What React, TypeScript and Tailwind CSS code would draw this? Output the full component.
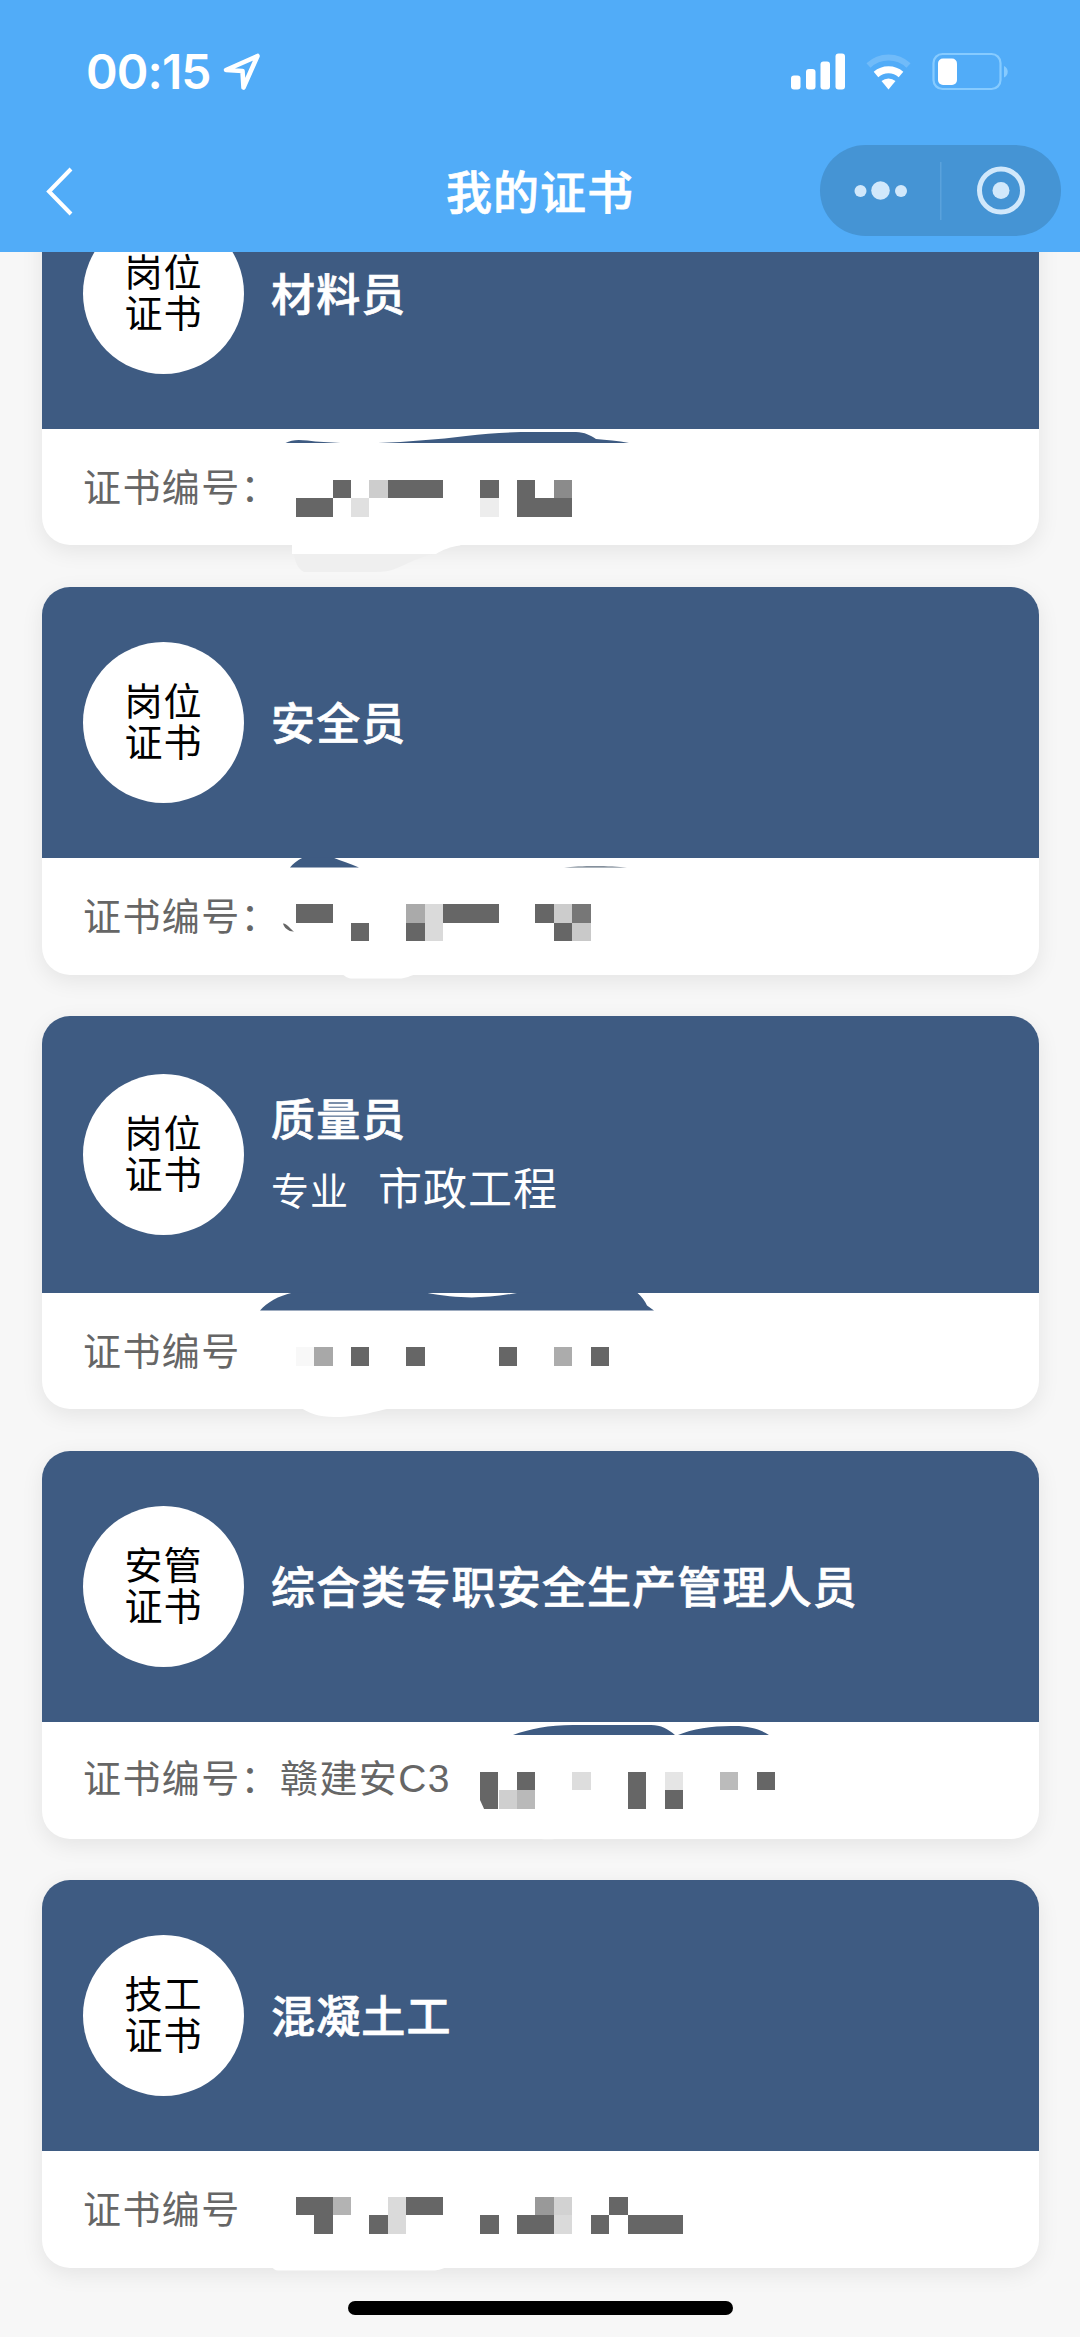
import type { ReactNode } from "react";

const DARK = "#666666";
const NAVY = "#3e5b82";
const CELL = 18.45;
const MOSAIC_X = 295.6;

/** A run of mosaic cells: row, first column, number of columns, colour. */
type Run = [number, number, number, string?];

function Mosaic({ y, runs }: { y: number; runs: Run[] }) {
  return (
    <g>
      {runs.map(([row, col, n, fill], i) => (
        <rect
          key={i}
          x={MOSAIC_X + col * CELL}
          y={y + row * CELL}
          width={n * CELL}
          height={CELL}
          fill={fill ?? DARK}
          shapeRendering="crispEdges"
        />
      ))}
    </g>
  );
}

interface Certificate {
  kind: string;
  title: string;
  major?: string;
  label: string;
  code?: string;
  viewBox: string;
  frame: string;
  head: string;
  marks: ReactNode;
}

const certificates: Certificate[] = [
  {
    kind: "岗位",
    title: "材料员",
    label: "证书编号：",
    viewBox: "0 158 997 387",
    frame: "h-[387px]",
    head: "h-[271px]",
    marks: (
      <>
        <path d="M285.5 443c6-3.500 13-3.500 22-2.500 10 1.300 22 2.100 33 2.500zM378 443c30-1.200 60-3.500 88-7 24-3.200 45-4 68-4h42c9 .4 14 3 20 7 10 1 22 1.600 33 4z" fill={NAVY} />
        <path d="M292 540h176l-8 5.500c-9 1-18 4.500-24 8.500H292z" fill="#ffffff" />
        <path d="M294 554h139c-20 5-26 11-41 16-8 2-14 2-22 2h-66c-6-3-9-10-10-18z" fill="#efefef" />
        <Mosaic
          y={480}
          runs={[[0, 2, 1], [0, 4, 1, "#cdcdcd"], [0, 5, 3], [0, 10, 1], [0, 12, 1], [0, 14, 1, "#8b8b8b"], [1, 0, 2], [1, 3, 1, "#e0e0e0"], [1, 10, 1, "#ededed"], [1, 12, 3]]}
        />
      </>
    ),
  },
  {
    kind: "岗位",
    title: "安全员",
    label: "证书编号：",
    viewBox: "0 587 997 388",
    frame: "h-[388px]",
    head: "h-[271px]",
    marks: (
      <>
        <path d="M290 867.500c3-4 7-7 13-10h30c8 3.500 17 6 26 10z" fill={NAVY} />
        <path d="M564 867.500c16-1.800 46-1.800 63 0z" fill="#5d6c7c" />
        <path d="M283 923.500c3-.8 8 6 11 8-5 .4-10-3.500-11-8z" fill={DARK} />
        <path d="M341 973h77c-8 3-12 5.500-19 5.500h-47c-5 0-7-2.500-11-5.500z" fill="#ffffff" />
        <Mosaic
          y={904.3}
          runs={[[0, 0, 2], [0, 6, 1, "#aaaaaa"], [0, 7, 1, "#dadada"], [0, 8, 3], [0, 13, 1], [0, 14, 1, "#cccccc"], [0, 15, 1, "#777777"], [1, 3, 1], [1, 6, 1], [1, 7, 1, "#dadada"], [1, 14, 1], [1, 15, 1, "#c9c9c9"]]}
        />
      </>
    ),
  },
  {
    kind: "岗位",
    title: "质量员",
    major: "市政工程",
    label: "证书编号",
    viewBox: "0 1016 997 393",
    frame: "h-[393px]",
    head: "h-[277px]",
    marks: (
      <>
        <path d="M260 1310.500c7-8 18-14.500 33-18h132c36 6.500 57 6.500 95 0h117c5 4 8 9 10 13l7 5z" fill={NAVY} />
        <path d="M300 1407h98c-21 3-35 10-63 10-17 0-27-4-35-10z" fill="#ffffff" />
        <Mosaic
          y={1347.4}
          runs={[[0, 0, 1, "#f8f8f8"], [0, 1, 1, "#a8a8a8"], [0, 3, 1], [0, 6, 1], [0, 11, 1], [0, 14, 1, "#acacac"], [0, 16, 1]]}
        />
      </>
    ),
  },
  {
    kind: "安管",
    title: "综合类专职安全生产管理人员",
    label: "证书编号：赣建安",
    code: "C3",
    viewBox: "0 1451 997 388",
    frame: "h-[388px]",
    head: "h-[271px]",
    marks: (
      <>
        <path d="M513 1735c16-6 36-10 60-10h78c10 0 17 4 24 10zM678 1735c14-6 34-9 53-9 17-.6 29 3 38 9z" fill={NAVY} />
        <path d="M525 1837h46c-8 3-38 3-46 0z" fill="#ffffff" />
        <Mosaic
          y={1772}
          runs={[[0, 12, 1], [0, 15, 1, "#dddddd"], [0, 18, 1], [0, 20, 1, "#e5e5e5"], [0, 23, 1, "#bbbbbb"], [0, 25, 1], [1, 11, 1, "#cfcfcf"], [1, 12, 1, "#b9b9b9"], [1, 18, 1], [1, 20, 1]]}
        />
        <path d="M480 1772h18v36.900h-13.900l-4.100-9z" fill={DARK} />
      </>
    ),
  },
  {
    kind: "技工",
    title: "混凝土工",
    label: "证书编号",
    viewBox: "0 1880 997 388",
    frame: "h-[388px]",
    head: "h-[271px]",
    marks: (
      <>
        <path d="M271 2266h180c-6 1-10 4-16 4.500H278c-3 0-5-2-7-4.500z" fill="#ffffff" />
        <Mosaic
          y={2196.8}
          runs={[[0, 0, 2], [0, 2, 1, "#b3b3b3"], [0, 5, 1, "#dadada"], [0, 6, 2], [0, 13, 1, "#999999"], [0, 14, 1, "#d2d2d2"], [0, 17, 1], [1, 1, 1], [1, 4, 1], [1, 5, 1, "#dadada"], [1, 10, 1], [1, 12, 2], [1, 14, 1, "#dadada"], [1, 16, 1], [1, 18, 3]]}
        />
      </>
    ),
  },
];

function CertificateCard({ cert }: { cert: Certificate }) {
  return (
    <article className={`relative flex shrink-0 flex-col rounded-[28px] bg-white shadow-[0_6px_22px_rgba(0,0,0,0.08)] ${cert.frame}`}>
      <div className={`flex shrink-0 items-center gap-[27px] rounded-t-[28px] bg-[#3e5b82] pl-[41px] ${cert.head}`}>
        <div className="flex size-[161px] shrink-0 items-center justify-center rounded-full bg-white pb-[7px] text-[38px] leading-[41px] tracking-[1px] text-black">
          <p>
            {cert.kind}
            <br />
            证书
          </p>
        </div>
        <div className="flex flex-col pb-[3px] text-white">
          <h2 className="text-[44px] leading-[60px] font-medium tracking-[1.150px] [-webkit-text-stroke:0.7px_white]">{cert.title}</h2>
          {cert.major && (
            <p className="mt-[9px] flex items-baseline gap-[29px] leading-[60px]">
              <span className="text-[38px] tracking-[1px]">专业</span>
              <span className="text-[44px] tracking-[1px]">{cert.major}</span>
            </p>
          )}
        </div>
      </div>
      <div className="flex grow items-center pb-[5px] pl-[41px] text-[38px] leading-[56px] tracking-[1.400px] text-[#666666]">
        <p>
          {cert.label}
          {cert.code && <span className="font-['Liberation_Sans'] text-[39px]">{cert.code}</span>}
        </p>
      </div>
      <svg className="pointer-events-none absolute inset-0 size-full overflow-visible" viewBox={cert.viewBox}>
        <g transform="translate(-42 0)">{cert.marks}</g>
      </svg>
    </article>
  );
}

function StatusBar() {
  return (
    <div className="flex h-[142px] items-center justify-between pt-[2px] pr-[71px] pl-[86px]">
      <div className="flex items-center gap-3">
        <span className="font-[Inter] text-[48px] leading-none font-semibold tracking-[-0.900px]">00:15</span>
        <svg className="h-[38px] w-[38px]" viewBox="0 0 38 38" fill="none" stroke="currentColor" strokeWidth="4.600" strokeLinejoin="round">
          <path d="M34.500 3 20.500 34.500 19.500 18 3 17z" />
        </svg>
      </div>
      <svg className="h-[40px] w-[218px]" viewBox="0 0 218 40" fill="currentColor">
        <rect x="0" y="23.500" width="9.500" height="14" rx="3" />
        <rect x="15" y="17" width="9.500" height="20.500" rx="3" />
        <rect x="29.500" y="9.500" width="9.500" height="28" rx="3" />
        <rect x="44.500" y="1.500" width="9.500" height="36" rx="3" />
        <g fill="none" stroke="currentColor">
          <path d="M77.500 13.500a29 29 0 0 1 40 0" strokeWidth="6" opacity=".18" />
          <path d="M85 22.500a19 19 0 0 1 25 0" strokeWidth="7" />
        </g>
        <path d="M90.500 29a11 11 0 0 1 14 0l-7 8.500z" />
        <rect x="142.500" y="2" width="67" height="35" rx="9" fill="none" stroke="#86cbff" strokeWidth="2.200" />
        <rect x="147" y="6.500" width="19" height="26.500" rx="5" />
        <path d="M213 14c5 2.500 5 9 0 11.500z" fill="#86cbff" />
      </svg>
    </div>
  );
}

function NavBar() {
  return (
    <div className="relative flex h-[110px] items-center justify-between pr-[19px] pb-[13px] pl-[45px]">
      <svg className="h-[52px] w-[30px]" viewBox="0 0 30 52" fill="none" stroke="currentColor" strokeWidth="4">
        <path d="M26 4 4 26.500 26 49" />
      </svg>
      <h1 className="absolute inset-x-0 top-[15px] text-center text-[46px] leading-[64px] font-medium tracking-[1px] [-webkit-text-stroke:0.7px_white]">我的证书</h1>
      <div className="flex h-[91px] w-[241px] items-center rounded-full bg-[#4594d4] text-[#d1e8fb]">
        <svg className="h-[91px] w-[241px]" viewBox="0 0 241 91" fill="currentColor">
          <circle cx="40.500" cy="46" r="6" />
          <circle cx="60.500" cy="45.500" r="9.300" />
          <circle cx="81" cy="46" r="6" />
          <rect x="120" y="17" width="1.500" height="58" fill="#5aa2dc" />
          <circle cx="181" cy="45.500" r="21.500" fill="none" stroke="currentColor" strokeWidth="5" />
          <circle cx="181" cy="45.500" r="8.500" />
        </svg>
      </div>
    </div>
  );
}

export default function App() {
  return (
    <div className="relative flex h-[2337px] w-[1080px] flex-col overflow-hidden bg-[#f7f7f7] font-['Noto_Sans_CJK_SC',sans-serif]">
      <header className="z-10 h-[252px] shrink-0 bg-[#51acf8] text-white">
        <StatusBar />
        <NavBar />
      </header>
      <main className="-mt-[94px] flex flex-col gap-[41.500px] pr-[41px] pl-[42px]">
        {certificates.map((cert) => (
          <CertificateCard key={cert.title} cert={cert} />
        ))}
      </main>
      <div className="absolute bottom-[22px] left-[348px] h-[14px] w-[385px] rounded-full bg-black" />
    </div>
  );
}
